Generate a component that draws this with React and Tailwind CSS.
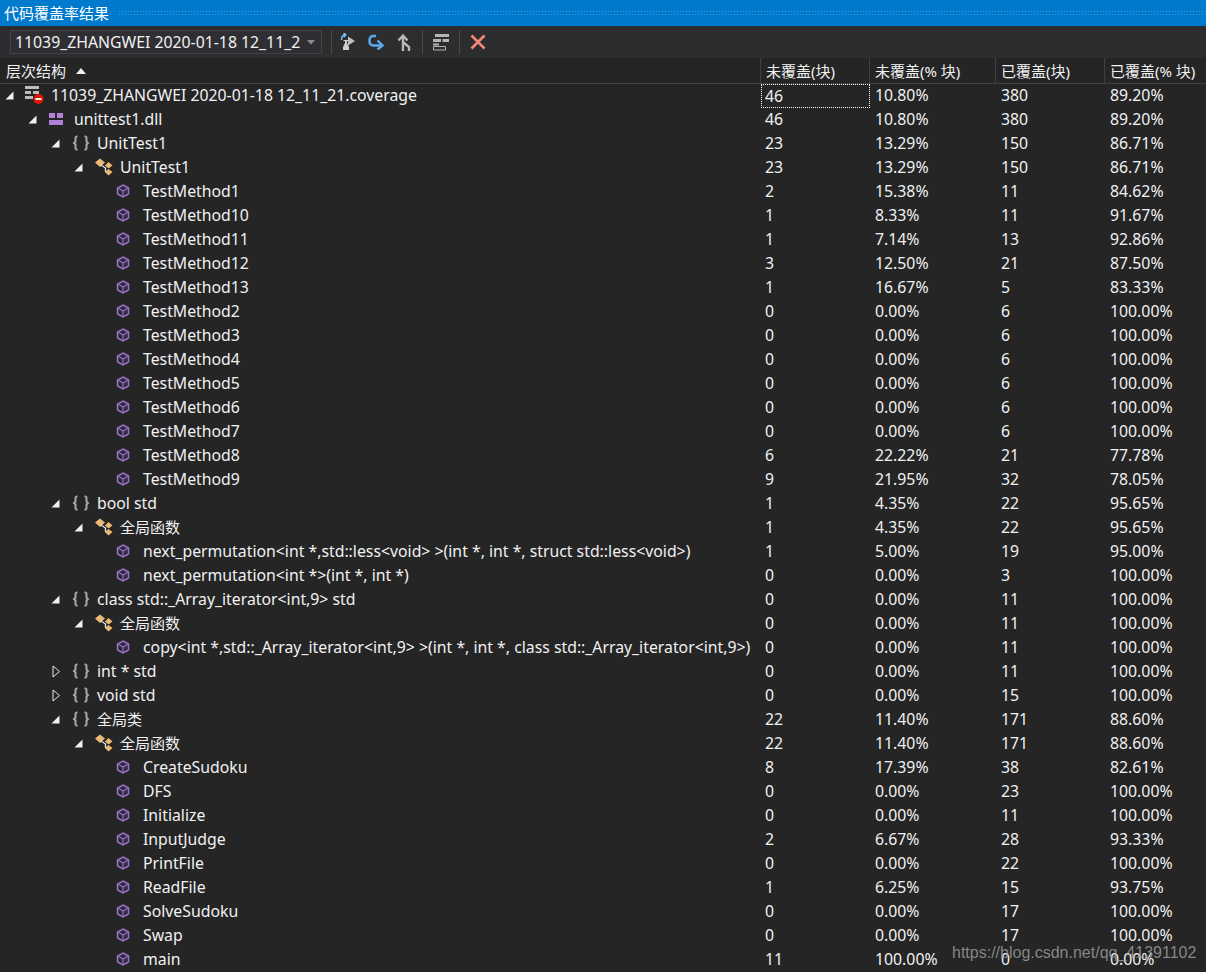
const FONT = "font-['Noto_Sans','Noto_Sans_CJK_SC',sans-serif]";

const rows = [
  [0, "cov", "open", "11039_ZHANGWEI 2020-01-18 12_11_21.coverage", "46", "10.80%", "380", "89.20%"],
  [1, "dll", "open", "unittest1.dll", "46", "10.80%", "380", "89.20%"],
  [2, "ns", "open", "UnitTest1", "23", "13.29%", "150", "86.71%"],
  [3, "cls", "open", "UnitTest1", "23", "13.29%", "150", "86.71%"],
  [4, "m", "", "TestMethod1", "2", "15.38%", "11", "84.62%"],
  [4, "m", "", "TestMethod10", "1", "8.33%", "11", "91.67%"],
  [4, "m", "", "TestMethod11", "1", "7.14%", "13", "92.86%"],
  [4, "m", "", "TestMethod12", "3", "12.50%", "21", "87.50%"],
  [4, "m", "", "TestMethod13", "1", "16.67%", "5", "83.33%"],
  [4, "m", "", "TestMethod2", "0", "0.00%", "6", "100.00%"],
  [4, "m", "", "TestMethod3", "0", "0.00%", "6", "100.00%"],
  [4, "m", "", "TestMethod4", "0", "0.00%", "6", "100.00%"],
  [4, "m", "", "TestMethod5", "0", "0.00%", "6", "100.00%"],
  [4, "m", "", "TestMethod6", "0", "0.00%", "6", "100.00%"],
  [4, "m", "", "TestMethod7", "0", "0.00%", "6", "100.00%"],
  [4, "m", "", "TestMethod8", "6", "22.22%", "21", "77.78%"],
  [4, "m", "", "TestMethod9", "9", "21.95%", "32", "78.05%"],
  [2, "ns", "open", "bool std", "1", "4.35%", "22", "95.65%"],
  [3, "cls", "open", "全局函数", "1", "4.35%", "22", "95.65%"],
  [4, "m", "", "next_permutation<int *,std::less<void> >(int *, int *, struct std::less<void>)", "1", "5.00%", "19", "95.00%"],
  [4, "m", "", "next_permutation<int *>(int *, int *)", "0", "0.00%", "3", "100.00%"],
  [2, "ns", "open", "class std::_Array_iterator<int,9> std", "0", "0.00%", "11", "100.00%"],
  [3, "cls", "open", "全局函数", "0", "0.00%", "11", "100.00%"],
  [4, "m", "", "copy<int *,std::_Array_iterator<int,9> >(int *, int *, class std::_Array_iterator<int,9>)", "0", "0.00%", "11", "100.00%"],
  [2, "ns", "closed", "int * std", "0", "0.00%", "11", "100.00%"],
  [2, "ns", "closed", "void std", "0", "0.00%", "15", "100.00%"],
  [2, "ns", "open", "全局类", "22", "11.40%", "171", "88.60%"],
  [3, "cls", "open", "全局函数", "22", "11.40%", "171", "88.60%"],
  [4, "m", "", "CreateSudoku", "8", "17.39%", "38", "82.61%"],
  [4, "m", "", "DFS", "0", "0.00%", "23", "100.00%"],
  [4, "m", "", "Initialize", "0", "0.00%", "11", "100.00%"],
  [4, "m", "", "InputJudge", "2", "6.67%", "28", "93.33%"],
  [4, "m", "", "PrintFile", "0", "0.00%", "22", "100.00%"],
  [4, "m", "", "ReadFile", "1", "6.25%", "15", "93.75%"],
  [4, "m", "", "SolveSudoku", "0", "0.00%", "17", "100.00%"],
  [4, "m", "", "Swap", "0", "0.00%", "17", "100.00%"],
  [4, "m", "", "main", "11", "100.00%", "0", "0.00%"],
];

function Arrow({ state }) {
  if (state === "open")
    return (
      <svg width="9" height="9" viewBox="0 0 9 9" className="block">
        <path d="M8.5 0.5V8.5H0.5Z" fill="#f0f0f0" />
      </svg>
    );
  if (state === "closed")
    return (
      <svg width="9" height="13" viewBox="0 0 9 13" className="ml-[1px] block">
        <path d="M1 1V12L7.5 6.5Z" fill="none" stroke="#e8e8e8" />
      </svg>
    );
  return null;
}

function NodeIcon({ kind }) {
  if (kind === "cov")
    return (
      <svg width="21" height="20" viewBox="0 0 21 20" className="block">
        <path d="M1 1H15V4H1ZM1 6H7V9H1ZM9 6H15V9H9ZM1 11H9V14H1Z" fill="#bcbcbc" />
        <circle cx="14.5" cy="14" r="5" fill="#e51400" />
        <path d="M11.5 13H17.5V15H11.5Z" fill="#f4f4f4" />
      </svg>
    );
  if (kind === "dll")
    return (
      <svg width="16" height="14" viewBox="0 0 16 14" className="ml-[1px] block">
        <path d="M1 1H7V6H1ZM9 1H15V6H9ZM1 8H15V13H1Z" fill="#b180d7" />
      </svg>
    );
  if (kind === "ns")
    return (
      <svg width="18" height="16" viewBox="0 0 18 16" className="ml-[2px] block">
        <path d="M5.5 1.5H4.5Q3.5 1.5 3.5 3V6.5L2 8L3.5 9.5V13Q3.5 14.5 4.5 14.5H5.5M12.5 1.5H13.5Q14.5 1.5 14.5 3V6.5L16 8L14.5 9.5V13Q14.5 14.5 13.5 14.5H12.5" fill="none" stroke="#a8a8a8" strokeWidth="2" />
      </svg>
    );
  if (kind === "cls")
    return (
      <svg width="20" height="18" viewBox="0 0 20 18" className="ml-[1px] block">
        <path d="M6 0.5L11 4.5L6 9L1 4.5Z" fill="#eeb877" />
        <path d="M14.5 4L18.5 7.5L14.5 10.5L11 7.5Z" fill="#eeb877" />
        <path d="M14.5 11L18.5 14L14.5 17.5L11 14Z" fill="#eeb877" />
        <path d="M7 7L11.5 10V14" fill="none" stroke="#e8e8e8" strokeWidth="1.3" />
      </svg>
    );
  return (
    <svg width="14" height="14" viewBox="0 0 14 14" className="block">
      <path d="M7 1L12.5 4V10L7 13L1.5 10V4Z" fill="#2f2a3a" stroke="#9a6fc8" strokeWidth="1.5" />
      <path d="M2.5 4.5L7 7L11.5 4.5M7 7V12" fill="none" stroke="#9a6fc8" strokeWidth="1.2" />
    </svg>
  );
}

function Row({ row, focused }) {
  const [level, kind, state, name, a, b, c, d] = row;
  const cjk = /[\u4e00-\u9fff]/.test(name);
  return (
    <div className="grid h-6 grid-cols-[761px_109px_126px_109px_1fr] grid-rows-[24px] text-[15.8px]">
      <div className="flex items-center whitespace-nowrap pb-[2px]" style={{ paddingLeft: 5 + level * 23 }}>
        <span className="flex w-[19px] shrink-0 items-center"><Arrow state={state} /></span>
        <span className="flex w-[23px] shrink-0 items-center"><NodeIcon kind={kind} /></span>
        <span className={cjk ? "pl-[4px] text-[15px]" : "pl-[4px]"}>{name}</span>
      </div>
      <div className={focused ? "flex items-center border border-dotted border-white pb-[1px] pl-[3px]" : "flex items-center pb-[2px] pl-1"}>{a}</div>
      <div className="flex items-center pb-[2px] pl-[5px]">{b}</div>
      <div className="flex items-center pb-[2px] pl-[5px]">{c}</div>
      <div className="flex items-center pb-[2px] pl-[5px]">{d}</div>
    </div>
  );
}

function HeaderCell({ children }) {
  return <div className="flex h-full items-center border-l border-[#3f3f46] pl-[5px]">{children}</div>;
}

function Sep() {
  return <div className="mx-2 h-6 w-px bg-[#4a4a4d]" />;
}

export default function App() {
  return (
    <div className={`relative h-[972px] w-[1206px] overflow-hidden bg-[#252526] text-[15px] leading-6 text-[#f1f1f1] ${FONT}`}>
      <div className="flex h-[26px] items-center gap-[9px] bg-[#007acc] pl-1 text-white">
        <span>代码覆盖率结果</span>
        <div className="h-[7px] flex-1 bg-[radial-gradient(#3f9ad8_1px,transparent_1px)] bg-[length:3px_3px]" />
      </div>
      <div className="flex h-8 items-center bg-[#2d2d30] pl-[10px]">
        <div className="flex h-6 w-[312px] items-center justify-between border border-[#434346] bg-[#2f2f33] pl-1 pr-[6px]">
          <span className="w-[286px] overflow-hidden whitespace-nowrap text-[15.8px] leading-[22px]">11039_ZHANGWEI 2020-01-18 12_11_21.coverage</span>
          <svg width="8" height="5" viewBox="0 0 8 5"><path d="M0 0H8L4 4.5Z" fill="#8c8c8c" /></svg>
        </div>
        <div className="ml-[1px]"><Sep /></div>
        <div className="flex w-4 justify-center">
          <svg width="16" height="18" viewBox="0 0 16 18">
            <path d="M8 3.5L15 8L8 12.5Z" fill="#c0c0c0" />
            <path d="M3 17V14L5 10V8H3.5V7H8.5V8H7V10L9 14V17Z" fill="#d0d0d0" />
            <path d="M1.5 7Q1.5 2 6 1.5M6 1.5L3.5 0M6 1.5L4 4" fill="none" stroke="#75beff" strokeWidth="1.5" />
          </svg>
        </div>
        <div className="ml-[10px] flex w-5 justify-center">
          <svg width="17" height="16" viewBox="0 0 17 16">
            <path d="M8 2H5.5Q1.5 2 1.5 6V7.5Q1.5 11 5.5 11.5H14" fill="none" stroke="#59a9ec" strokeWidth="2.4" />
            <path d="M9.5 6.5L14.5 11.5L9.5 15.5" fill="none" stroke="#59a9ec" strokeWidth="2.4" />
          </svg>
        </div>
        <div className="ml-2 flex w-5 justify-center">
          <svg width="14" height="18" viewBox="0 0 14 18">
            <path d="M6 18V3M1.5 7.5L6 2.5L10.5 7.5M6 9L12 14V18" fill="none" stroke="#b8b8b8" strokeWidth="2.4" />
          </svg>
        </div>
        <Sep />
        <div className="flex w-5 justify-center">
          <svg width="18" height="18" viewBox="0 0 18 18">
            <path d="M3 1H17V4H3ZM1 6H9V9H1ZM10.5 6H17V9H10.5ZM1 10.5H7V12.5H1Z" fill="#b5b5b5" />
            <path d="M1.5 13.5H13.5V17H1.5Z" fill="none" stroke="#b5b5b5" />
          </svg>
        </div>
        <Sep />
        <div className="flex w-5 justify-center">
          <svg width="16" height="16" viewBox="0 0 16 16">
            <path d="M1.5 1.5L14.5 14.5M14.5 1.5L1.5 14.5" stroke="#f48771" strokeWidth="2.6" />
          </svg>
        </div>
      </div>
      <div className="grid h-[26px] grid-cols-[760px_109px_126px_109px_1fr] border-b border-[#3f3f46]">
        <div className="flex h-full items-center gap-[10px] pl-[6px]">
          <span>层次结构</span>
          <svg width="10" height="6" viewBox="0 0 10 6"><path d="M5 0L10 6H0Z" fill="#f1f1f1" /></svg>
        </div>
        <HeaderCell>未覆盖(块)</HeaderCell>
        <HeaderCell>未覆盖(% 块)</HeaderCell>
        <HeaderCell>已覆盖(块)</HeaderCell>
        <HeaderCell>已覆盖(% 块)</HeaderCell>
      </div>
      <div>
        {rows.map((r, i) => (
          <Row key={i} row={r} focused={i === 0} />
        ))}
      </div>
      <div className="absolute left-[952px] top-[942px] font-['Liberation_Sans',sans-serif] text-[16px] leading-[22px] text-[#a0a0a0]/80">
        https://blog.csdn.net/qq_41391102
      </div>
    </div>
  );
}
